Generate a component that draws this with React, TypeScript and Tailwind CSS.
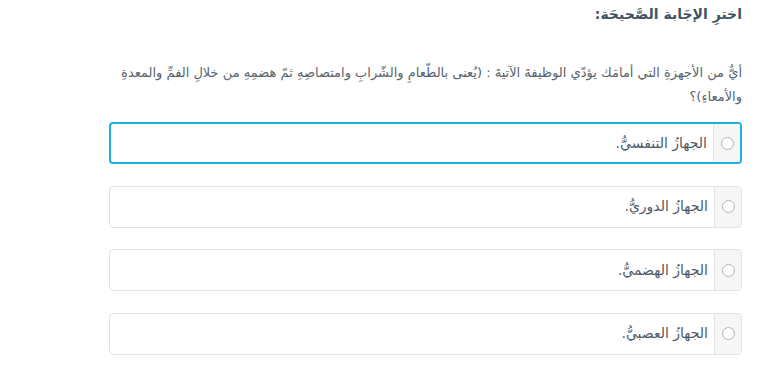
const options = [
  { id: 1, label: "الجهازُ التنفسيُّ.", active: true },
  { id: 2, label: "الجهازُ الدوريُّ.", active: false },
  { id: 3, label: "الجهازُ الهضميُّ.", active: false },
  { id: 4, label: "الجهازُ العصبيُّ.", active: false },
]

export default function App() {
  return (
    <main
      dir="rtl"
      className="w-[773px] h-[384px] bg-white pr-[31px] pl-[109px] pt-[3px] overflow-hidden"
      style={{ fontFamily: '"DejaVu Sans", "Noto Sans", sans-serif' }}
    >
      <h2 className="text-[14px] font-bold text-[#3f5566] leading-[22px]">اخترِ الإجَابة الصَّحيحَة:</h2>
      <p className="mt-[36px] text-[13px] text-[#58646e] leading-[24px]">
        أيٌّ من الأجهزةِ التي أمامَك يؤدّي الوظيفةَ الآتيةَ : (يُعنى بالطّعامِ والشّرابِ وامتصاصِهِ ثمّ هضمِهِ من خلالِ الفمِّ والمعدةِ والأمعاءِ)؟
      </p>
      <div className="mt-[13px] flex flex-col gap-[21.5px]">
        {options.map((option) => (
          <label
            key={option.id}
            className={
              option.active
                ? "flex h-[42px] rounded-[4px] border-2 border-[#1eb0e0] overflow-hidden"
                : "flex h-[42px] rounded-[4px] border border-[#e3e3e3] overflow-hidden"
            }
          >
            <div className="w-[27px] shrink-0 flex items-center justify-center bg-[#f6f6f6] border-l border-[#e3e3e3]">
              <span className="w-[13px] h-[13px] rounded-full border border-[#b5b5b5] bg-white" />
            </div>
            <span className="flex items-center pr-[6px] text-[14px] text-[#4e5a64]">{option.label}</span>
          </label>
        ))}
      </div>
    </main>
  )
}
